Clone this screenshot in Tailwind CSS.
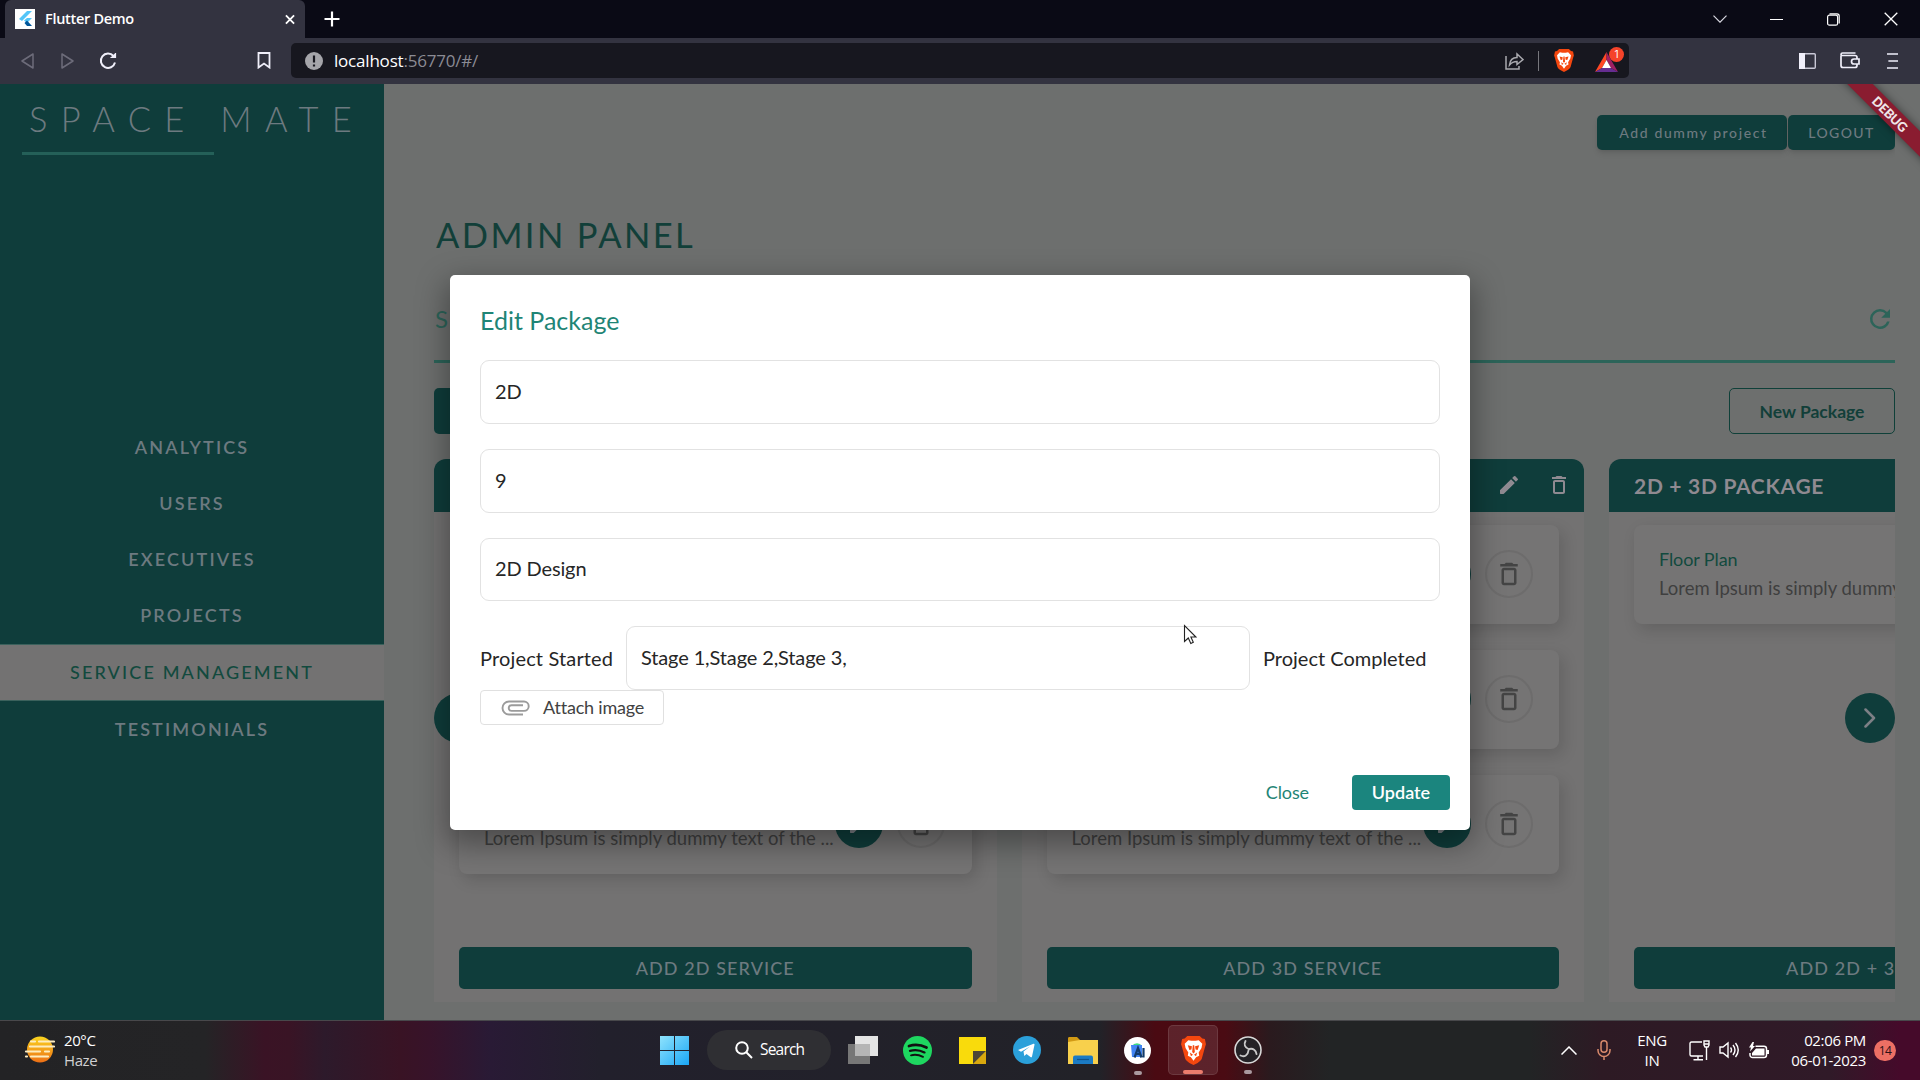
<!DOCTYPE html>
<html lang="en">
<head>
<meta charset="utf-8">
<title>Flutter Demo</title>
<script src="https://cdn.jsdelivr.net/npm/@tailwindcss/browser@4"></script>
</head>
<body class="w-[1920px] h-[1080px] overflow-hidden flex flex-col bg-[#6d6f6e] font-[Lato,sans-serif]">
<svg class="hidden">
  <symbol id="trash" viewBox="0 0 24 24"><path fill="currentColor" d="M6 19c0 1.1.9 2 2 2h8c1.1 0 2-.9 2-2V9c0-1.100-.9-2-2-2H8c-1.100 0-2 .9-2 2v10zM8 9h8v10H8V9zm7.500-5l-1-1h-5l-1 1H5v2h14V4h-3.500z"/></symbol>
  <symbol id="pen" viewBox="0 0 24 24"><path fill="currentColor" d="M3 17.460v3.040c0 .28.22.5.5.5h3.040c.13 0 .26-.05.35-.15L17.810 9.940l-3.750-3.750L3.150 17.100c-.1.1-.15.22-.15.36zM20.710 7.040a1 1 0 0 0 0-1.410l-2.340-2.340a1 1 0 0 0-1.410 0l-1.830 1.830 3.750 3.750 1.830-1.830z"/></symbol>
  <symbol id="brave" viewBox="0 0 24 28"><path fill="#f4470f" d="M6 0h12l2.500 2.500L23 3l1 5-1 3-3 11c-.5 1.500-2 2.500-4 4l-4 2-4-2c-2-1.500-3.500-2.500-4-4L1 11 0 8l1-5 2.500-.5z"/><path fill="#fff" d="M7 4l3 .7h4L17 4l3.500 3.500-.8 4L17 16l.5 3-3 1.500L12 24l-2.500-3.500-3-1.500.5-3-2.700-4.500-.8-4z"/><path fill="#f4470f" d="M6.500 9l4 1-.5 3-2 .5zM17.500 9l-4 1 .5 3 2 .5zM11.300 9h1.400l.6 6.500L12 16.800l-1.300-1.300zM8.500 16l3 2-2 1.500zM15.500 16l-3 2 2 1.500z"/></symbol>
</svg>

<!-- Tab strip -->
<header class="h-[38px] shrink-0 bg-[#0a0a15] flex items-end pl-[5px] text-white">
  <div class="w-[300px] h-[38px] bg-[#333340] rounded-t-[6px] flex items-center pl-[10px] pr-[10px]">
    <div class="w-5 h-5 bg-white flex items-center justify-center">
      <svg class="w-4 h-[18px]" viewBox="0 0 16 18"><path fill="#54c5f8" d="M10 1h5L5 11 2 9z"/><path fill="#54c5f8" d="M10 8h5l-5 5-3-2.500z"/><path fill="#01579b" d="M7.500 13l2.500-2.500L15 16h-5z"/></svg>
    </div>
    <span class="ml-[10px] text-[14.500px] font-semibold tracking-[-0.300px] font-['Open_Sans',sans-serif] grow">Flutter Demo</span>
    <svg class="w-[10px] h-[11px]" viewBox="0 0 11 11" stroke="#fff" stroke-width="2"><path d="M1 1l9 9M10 1l-9 9"/></svg>
  </div>
  <svg class="w-4 h-4 ml-[19px] mb-[11px] self-end" viewBox="0 0 16 16" stroke="#fff" stroke-width="2.200"><path d="M8 0.500v15M.5 8h15"/></svg>
  <div class="ml-auto h-full flex items-center pr-[22px]">
    <svg class="w-[14px] h-[8px] mr-[43px]" viewBox="0 0 14 8" fill="none" stroke="#d8d8e0" stroke-width="1.200"><path d="M.5.7L7 7.200 13.500.7"/></svg>
    <div class="w-[13px] h-px bg-white mr-[44px]"></div>
    <svg class="w-[13px] h-[13px] mr-[44px]" viewBox="0 0 13 13" fill="none" stroke="#fff" stroke-width="1.200"><rect x=".6" y="2.200" width="10" height="10" rx="1.800"/><path d="M2.500.8H10a2.200 2.200 0 0 1 2.200 2.200v7.500"/></svg>
    <svg class="w-[14px] h-[14px]" viewBox="0 0 14 14" stroke="#fff" stroke-width="1.300"><path d="M.7.7l12.600 12.600M13.300.7L.7 13.300"/></svg>
  </div>
</header>

<!-- Toolbar -->
<div class="h-[46px] shrink-0 bg-[#333340] flex items-center pb-[1px]">
  <svg class="w-[13px] h-4 ml-[21px]" viewBox="0 0 13 16" fill="none" stroke="#6d6c7a" stroke-width="1.500" stroke-linejoin="round"><path d="M12 1v14L1 8z"/></svg>
  <svg class="w-[13px] h-4 ml-[27px]" viewBox="0 0 13 16" fill="none" stroke="#6d6c7a" stroke-width="1.500" stroke-linejoin="round"><path d="M1 1v14l11-7z"/></svg>
  <svg class="w-[18px] h-[18px] ml-[25px]" viewBox="0 0 18 18" fill="none" stroke="#f0effa" stroke-width="2"><path d="M14.500 4A7.200 7.200 0 1 0 16 10.500"/><path d="M11.500 5.500h5V1" fill="#f0effa" stroke-width="1.200"/></svg>
  <svg class="w-[14px] h-[17px] ml-[140px]" viewBox="0 0 14 17" fill="none" stroke="#f0effa" stroke-width="1.800"><path d="M1.500 1h11v14.500L7 11.500l-5.500 4z"/></svg>
  <div class="ml-[20px] w-[1338px] h-[35px] bg-[#17171f] rounded-[5px] flex items-center pl-[14px] pr-[5px]">
    <svg class="w-[18px] h-[18px]" viewBox="0 0 18 18"><circle cx="9" cy="9" r="9" fill="#a5a5aa"/><path d="M9 3.500v7M9 12.500v2" stroke="#17171f" stroke-width="2.200"/></svg>
    <span class="ml-[11px] text-[17px] tracking-[-0.200px] font-['Open_Sans',sans-serif] text-[#8b8b94] grow"><span class="text-white">localhost</span>:56770/#/</span>
    <svg class="w-[19px] h-[18px]" viewBox="0 0 19 18" fill="none" stroke="#a9a9ae" stroke-width="1.500"><path d="M1 4v13h13v-3M4.500 13c.5-5 3-7.500 7.500-7.500V2l6 5.500-6 5V9.500c-3 0-5.500 1-7.500 3.500z"/></svg>
    <div class="w-px h-5 bg-[#77777d] ml-[14px] mr-[15px]"></div>
    <svg class="w-5 h-[23px]"><use href="#brave"/></svg>
    <div class="relative ml-[21px] w-[29px] h-[25px]">
      <svg class="absolute left-0 bottom-[1px] w-[23px] h-5" viewBox="0 0 23 20"><path fill="#ff4724" d="M11.500 0L0 20l7-4 4.500-8z"/><path fill="#9e1f63" d="M11.500 0L23 20l-7-4-4.500-8z"/><path fill="#662d91" d="M0 20h23l-7-4H7z"/><path fill="#fff" d="M11.500 8L16 16H7z"/></svg>
      <span class="absolute right-0 top-[-1px] w-[15px] h-[15px] rounded-full bg-[#f5432a] text-white text-[10px] leading-[15px] text-center font-[Inter,sans-serif]">1</span>
    </div>
  </div>
  <svg class="w-[17px] h-4 ml-[170px]" viewBox="0 0 17 16"><rect x=".7" y=".7" width="15.600" height="14.600" rx="1" fill="none" stroke="#c9c8d6" stroke-width="1.400"/><path fill="#f0effa" d="M0 0h6v16H0z"/></svg>
  <svg class="w-5 h-[17px] ml-6" viewBox="0 0 20 17" fill="none" stroke="#f0effa" stroke-width="1.700"><path d="M1 3.500v10a2 2 0 0 0 2 2h12a2 2 0 0 0 2-2V12M17 7V5.500a2 2 0 0 0-2-2H2.500A1.500 1.500 0 0 1 1 2.300 1.500 1.500 0 0 1 2.500 1H15.500"/><path d="M19 7h-5a2.500 2.500 0 0 0 0 5h5z"/></svg>
  <svg class="w-[11px] h-4 ml-[27px]" viewBox="0 0 12 16" preserveAspectRatio="none" stroke="#f0effa" stroke-width="1.700"><path d="M0 1h12M1.500 8H12M0 15h12"/></svg>
</div>

<!-- Application page -->
<div class="relative h-[936px] shrink-0 flex overflow-hidden">
  <aside class="w-[384px] shrink-0 bg-[#0f3d3b] text-[#6d7a80]">
    <div class="h-[68px] pt-[12px] pl-[29px] text-[34.500px] leading-[46px] font-light tracking-[13.300px] whitespace-nowrap">SPACE MATE</div>
    <div class="ml-[22px] w-[192px] h-[3px] bg-[#246058]"></div>
    <nav class="mt-[264px] flex flex-col text-[18px] font-semibold tracking-[2.150px] text-center">
      <div class="h-14 leading-[56px]">ANALYTICS</div>
      <div class="h-14 leading-[57px]">USERS</div>
      <div class="h-14 leading-[57px]">EXECUTIVES</div>
      <div class="h-[57px] leading-[57px]">PROJECTS</div>
      <div class="h-[57px] leading-[54px] bg-[#737272] text-[#124a3e] font-medium border-y border-[#3b615c]">SERVICE MANAGEMENT</div>
      <div class="h-14 leading-[56px]">TESTIMONIALS</div>
    </nav>
  </aside>
  <main class="w-[1511px] shrink-0 pl-[50px] overflow-hidden">
    <div class="pt-[31px] flex justify-end gap-px text-[14px] font-medium text-[#6d7a80]">
      <div class="w-[190px] h-[35px] rounded-[5px] bg-[#0f3d3b] shadow-md leading-[36px] text-center tracking-[1.600px] pl-[3px]">Add dummy project</div>
      <div class="w-[107px] h-[35px] rounded-[5px] bg-[#0f3d3b] shadow-md leading-[36px] text-center tracking-[1.400px]">LOGOUT</div>
    </div>
    <h1 class="mt-[61px] h-[48px] pl-[2px] text-[34.500px] leading-[48px] tracking-[2.400px] text-[#123f39]">ADMIN PANEL</h1>
    <div class="mt-[19px] h-[85px] flex items-center justify-between border-b-[3px] border-[#2c6459]">
      <span class="text-[24px] text-[#2c6459] pl-px">S</span>
      <svg class="w-[30px] h-[30px] text-[#2c6459]" viewBox="0 0 24 24"><path fill="currentColor" d="M17.650 6.350A7.960 7.960 0 0 0 12 4a8 8 0 1 0 7.730 10h-2.080A6 6 0 1 1 12 6c1.660 0 3.140.69 4.220 1.780L13 11h7V4l-2.350 2.350z"/></svg>
    </div>
    <div class="mt-[25px] flex justify-between">
      <div class="w-[166px] h-[46px] rounded-[5px] bg-[#0f3d3b]"></div>
      <div class="w-[166px] h-[46px] rounded-[5px] border border-[#0f4039] leading-[45px] text-center text-[#123f39] font-bold text-[17.500px]">New Package</div>
    </div>
    <div class="mt-[25px] flex gap-[25px] w-[1738px]">
      <section class="w-[562.500px] h-[543px] shrink-0 bg-[#737272] rounded-t-[12px] overflow-hidden flex flex-col">
        <div class="h-[52.500px] shrink-0 bg-[#0f3d3b]"></div>
        <div class="p-[25px] pt-[13px] flex flex-col gap-[26px] text-[18px]">
          <div class="h-[99px] rounded-[8px] bg-[#757474] shadow-[4px_6px_16px_rgba(0,0,0,0.14)]"></div>
          <div class="h-[99px] rounded-[8px] bg-[#757474] shadow-[4px_6px_16px_rgba(0,0,0,0.14)]"></div>
          <div class="h-[99px] rounded-[8px] bg-[#757474] shadow-[4px_6px_16px_rgba(0,0,0,0.14)] flex items-center pl-[25px]">
            <div class="w-[351px] pt-[29px] leading-[29px]"><p class="text-[#3f3f3f] text-[18.500px] whitespace-nowrap">Lorem Ipsum is simply dummy text of the ...</p></div>
            <div class="w-12 h-12 rounded-full bg-[#0f3d3b] flex items-center justify-center text-[#7d8086]"><svg class="w-6 h-6"><use href="#pen"/></svg></div>
            <div class="ml-[14px] w-12 h-12 rounded-full border-2 border-[#6d6c6c] flex items-center justify-center text-[#444]"><svg class="w-[30px] h-[30px]"><use href="#trash"/></svg></div>
          </div>
        </div>
        <div class="mx-[25px] mt-[48px] h-[42px] shrink-0 rounded-[5px] bg-[#0f3d3b] leading-[42px] text-center text-[18px] font-medium tracking-[1.100px] text-[#6d7a80]">ADD 2D SERVICE</div>
      </section>
      <section class="w-[562.500px] h-[543px] shrink-0 bg-[#737272] rounded-t-[12px] overflow-hidden flex flex-col">
        <div class="h-[52.500px] shrink-0 bg-[#0f3d3b] pr-[13px] flex items-center justify-end text-[#8f8a91]"><svg class="w-6 h-6 mr-[26px]"><use href="#pen"/></svg><svg class="w-6 h-6"><use href="#trash"/></svg></div>
        <div class="p-[25px] pt-[13px] flex flex-col gap-[26px] text-[18px]">
          <div class="h-[99px] rounded-[8px] bg-[#757474] shadow-[4px_6px_16px_rgba(0,0,0,0.14)] flex items-center pl-[376px]">
            <div class="w-12 h-12 rounded-full bg-[#0f3d3b]"></div>
            <div class="ml-[14px] w-12 h-12 rounded-full border-2 border-[#6d6c6c] flex items-center justify-center text-[#444]"><svg class="w-[30px] h-[30px]"><use href="#trash"/></svg></div>
          </div>
          <div class="h-[99px] rounded-[8px] bg-[#757474] shadow-[4px_6px_16px_rgba(0,0,0,0.14)] flex items-center pl-[376px]">
            <div class="w-12 h-12 rounded-full bg-[#0f3d3b]"></div>
            <div class="ml-[14px] w-12 h-12 rounded-full border-2 border-[#6d6c6c] flex items-center justify-center text-[#444]"><svg class="w-[30px] h-[30px]"><use href="#trash"/></svg></div>
          </div>
          <div class="h-[99px] rounded-[8px] bg-[#757474] shadow-[4px_6px_16px_rgba(0,0,0,0.14)] flex items-center pl-[25px]">
            <div class="w-[351px] pt-[29px] leading-[29px]"><p class="text-[#3f3f3f] text-[18.500px] whitespace-nowrap">Lorem Ipsum is simply dummy text of the ...</p></div>
            <div class="w-12 h-12 rounded-full bg-[#0f3d3b] flex items-center justify-center text-[#7d8086]"><svg class="w-6 h-6"><use href="#pen"/></svg></div>
            <div class="ml-[14px] w-12 h-12 rounded-full border-2 border-[#6d6c6c] flex items-center justify-center text-[#444]"><svg class="w-[30px] h-[30px]"><use href="#trash"/></svg></div>
          </div>
        </div>
        <div class="mx-[25px] mt-[48px] h-[42px] shrink-0 rounded-[5px] bg-[#0f3d3b] leading-[42px] text-center text-[18px] font-medium tracking-[1.100px] text-[#6d7a80]">ADD 3D SERVICE</div>
      </section>
      <section class="w-[562.500px] h-[543px] shrink-0 bg-[#737272] rounded-t-[12px] overflow-hidden flex flex-col">
        <div class="h-[52.500px] shrink-0 bg-[#0f3d3b] px-[25px] flex items-center text-[#8f8a91] text-[21px] font-bold tracking-[0.700px]">2D + 3D PACKAGE</div>
        <div class="p-[25px] pt-[13px] h-[399px] shrink-0 text-[18px]">
          <div class="h-[99px] rounded-[8px] bg-[#757474] shadow-[4px_6px_16px_rgba(0,0,0,0.14)] flex items-center pl-[25px]">
            <div class="leading-[29px] whitespace-nowrap"><p class="text-[#124a3e] tracking-[-0.100px]">Floor Plan</p><p class="text-[#3f3f3f] text-[18.500px]">Lorem Ipsum is simply dummy</p></div>
          </div>
        </div>
        <div class="mx-[25px] mt-[36px] h-[42px] shrink-0 rounded-[5px] bg-[#0f3d3b] leading-[42px] text-center text-[18px] font-medium tracking-[1.100px] text-[#6d7a80]">ADD 2D + 3D SERVICE</div>
      </section>
    </div>
  </main>

  <!-- Carousel arrows float over the columns -->
  <div class="absolute left-[434px] top-[609px] w-[50px] h-[50px] rounded-full bg-[#0f3d3b]"></div>
  <div class="absolute left-[1845px] top-[609px] w-[50px] h-[50px] rounded-full bg-[#0f3d3b] flex items-center justify-center">
    <svg class="w-3 h-5" viewBox="0 0 12 20" fill="none" stroke="#7d8086" stroke-width="2.500" stroke-linecap="round" stroke-linejoin="round"><path d="M1.500 1.500L10 10l-8.500 8.500"/></svg>
  </div>

  <!-- Debug ribbon -->
  <div class="absolute left-[1819px] top-[21px] w-[142px] h-[18px] rotate-45 bg-[#8a1c30] shadow-[0_0_8px_rgba(0,0,0,0.5)] text-[#efe6e8] text-[13px] leading-[18px] tracking-[-0.300px] font-black text-center">DEBUG</div>

  <!-- Dialog -->
  <div class="absolute left-[450px] top-[191px] w-[1020px] h-[555px] rounded-[5px] bg-white shadow-[0_11px_30px_4px_rgba(0,0,0,0.35)] px-[30px] pt-[30px] text-[20px] text-[#262626] flex flex-col">
    <h2 class="h-[32px] leading-[31px] text-[25px] text-[#1f8576]">Edit Package</h2>
    <div class="mt-[23px] h-[64px] rounded-[9px] border border-[#e2e2e2] px-[14px] leading-[60px] tracking-[-0.130px]">2D</div>
    <div class="mt-[25px] h-[64px] rounded-[9px] border border-[#e2e2e2] px-[14px] leading-[60px] tracking-[-0.130px]">9</div>
    <div class="mt-[25px] h-[63px] rounded-[9px] border border-[#e2e2e2] px-[14px] leading-[59px] tracking-[-0.130px]">2D Design</div>
    <div class="mt-[25px] flex h-[64px] items-center">
      <span class="w-[146px] tracking-[0.150px]">Project Started</span>
      <div class="w-[624px] h-[64px] rounded-[9px] border border-[#e2e2e2] px-[14px] leading-[60px] tracking-[-0.130px]">Stage 1,Stage 2,Stage 3,</div>
      <span class="ml-[13px]">Project Completed</span>
    </div>
    <div class="w-[184px] h-[35px] rounded-[4px] border border-[#e0e0e0] flex items-center pl-[20px] text-[18px] tracking-[-0.200px] text-[#424242]">
      <svg class="w-[30px] h-[16px] mr-[12px]" viewBox="0 0 30 16" fill="none" stroke="#9b9b9b" stroke-width="1.900"><path d="M22 14.500H8a6.500 6.500 0 0 1 0-13h15a4.700 4.700 0 0 1 0 9.400H10.500a2.800 2.800 0 0 1 0-5.600H22"/></svg>Attach image
    </div>
    <div class="mt-[50px] flex justify-end items-center mr-[-10px] text-[18px]">
      <span class="mr-[43px] text-[#1f8576] tracking-[-0.100px]">Close</span>
      <div class="w-[98px] h-[35px] rounded-[4px] bg-[#1b857e] leading-[35px] text-center text-white font-semibold">Update</div>
    </div>
  </div>
  <svg class="absolute left-[1183px] top-[540px] w-[14px] h-[21px]" viewBox="0 0 14 21"><path d="M1.500 1.500v16l3.800-3.500 2.500 5.500 2.500-1.200-2.400-5.300h5z" fill="#fff" stroke="#222" stroke-width="1.100"/></svg>
</div>

<!-- Taskbar -->
<footer class="relative h-[60px] shrink-0 border-t border-[#48484b] flex items-center text-white font-['Open_Sans',sans-serif] bg-[linear-gradient(90deg,#232325_0px,#242426_205px,#3a1325_265px,#391425_290px,#2d1a2b_325px,#391324_400px,#37132a_430px,#291a35_490px,#22202c_600px,#222228_1100px,#4a0a12_1155px,#4a0b13_1225px,#2a1a1e_1270px,#222425_1330px,#222425_1530px,#2d1a24_1600px,#301a28_1830px,#450a2a_1900px)]">
  <svg class="w-[31px] h-7 ml-[24px] mb-[2px]" viewBox="0 0 31 28"><defs><linearGradient id="sun" x2="0" y2="1"><stop stop-color="#fbd51f"/><stop offset="1" stop-color="#ec6f16"/></linearGradient></defs><circle cx="16" cy="13.500" r="13" fill="url(#sun)"/><g stroke="#fdecc0" stroke-width="2.200" stroke-linecap="round"><path d="M7 5.500h4M15 5.500h15M6 10.500h24M2 15.500h14M21 15.500h4M2 20.500h1M7 20.500h17"/></g></svg>
  <div class="ml-[9px] mb-[2px] w-[80px] leading-[20px] text-[15px] tracking-[-0.400px]"><p>20°C</p><p class="text-[#d0d0d2]">Haze</p></div>
  <div class="absolute left-[660px] top-[4px] h-[50px] flex items-center">
    <svg class="w-[29px] h-[29px]" viewBox="0 0 29 29"><defs><linearGradient id="win" x2="1" y2="1"><stop stop-color="#8fe3fd"/><stop offset="1" stop-color="#1aa6f5"/></linearGradient></defs><path fill="url(#win)" d="M0 0h14v14H0zM15 0h14v14H15zM0 15h14v14H0zM15 15h14v14H15z"/></svg>
    <div class="ml-[18px] w-[124px] h-10 rounded-full bg-[#2f2f33] flex items-center pl-[28px] text-[15.500px] tracking-[-0.800px]">
      <svg class="w-[18px] h-[18px] mr-[7px]" viewBox="0 0 18 18" fill="none" stroke="#fff" stroke-width="2"><circle cx="7" cy="7" r="5.800"/><path d="M11.300 11.300L17 17"/></svg>Search
    </div>
    <svg class="w-[30px] h-[28px] ml-[17px]" viewBox="0 0 30 28"><path fill="#e4e4e4" d="M7 0h23v20H7z"/><path fill="#777" d="M0 8h22v20H0z"/><path fill="#b5b5b5" d="M7 8h15v12H7z"/></svg>
    <svg class="w-[29px] h-[29px] ml-[25px]" viewBox="0 0 29 29"><circle cx="14.500" cy="14.500" r="14.500" fill="#1ed760"/><g fill="none" stroke="#111" stroke-linecap="round"><path d="M6 10c6-1.800 12-1.200 17.500 1.500" stroke-width="2.800"/><path d="M7 14.800c5-1.400 10-.8 14.500 1.600" stroke-width="2.300"/><path d="M8 19.300c4-1 8-.5 12 1.500" stroke-width="1.900"/></g></svg>
    <svg class="w-[27px] h-[27px] ml-[27px]" viewBox="0 0 27 27"><path fill="#f9db0c" d="M0 0h27v14L14 27H0z"/><path fill="#4b4636" d="M14 14h13L14 27z"/><path fill="#d9a80e" d="M27 14v13H14z"/></svg>
    <svg class="w-7 h-7 ml-[27px]" viewBox="0 0 28 28"><circle cx="14" cy="14" r="14" fill="#2ba0da"/><path fill="#fff" d="M5 14l15.500-6.200c.8-.2 1.100.2 1 .9L19 20.500c-.2.900-.8 1-1.500.6l-4-3-2.200 2-.8-4.600L17 10.500l-9 5.200z"/></svg>
    <svg class="w-[30px] h-[27px] ml-[27px]" viewBox="0 0 30 27"><path fill="#d29a14" d="M0 1.500C0 .5.5 0 1.500 0H9l3 3v4H0z"/><path fill="#f8d04c" d="M0 5l12-2h18v24H0z"/><path fill="#1b7bc4" d="M5 27v-6.500a2 2 0 0 1 2-2h16a2 2 0 0 1 2 2V27z"/><path stroke="#0f548c" stroke-width="1.200" d="M9 22.500h12"/></svg>
    <div class="relative w-[27px] h-[29px] ml-[26px]">
      <svg class="w-[27px] h-[29px]" viewBox="0 0 27 29"><circle cx="13.500" cy="14.500" r="13.500" fill="#fff"/><path fill="#3ddc84" d="M8 10a5.500 4.500 0 0 1 10 0z"/><path fill="#4285f4" d="M7 9h11v12H8z"/><path fill="none" stroke="#123b6b" stroke-width="2.200" d="M10.500 21.500L14 12l3.500 9.500M12 18h4.500M19.500 12v9.500"/></svg>
      <i class="absolute left-[10px] top-[35px] w-2 h-1 rounded-full bg-[#a9999f]"></i>
    </div>
    <div class="relative ml-[17px] w-[50px] h-[50px] rounded-[5px] bg-white/10 border border-white/10 flex items-center justify-center">
      <svg class="w-[25px] h-[29px]"><use href="#brave"/></svg>
      <i class="absolute left-[14px] bottom-0 w-5 h-1 rounded-full bg-[#ec7c6d]"></i>
    </div>
    <div class="relative w-7 h-7 ml-[16px]">
      <svg class="w-7 h-7" viewBox="0 0 28 28"><circle cx="14" cy="14" r="13" fill="#242226" stroke="#d8d8d8" stroke-width="1.600"/><g fill="none" stroke="#c9c9c9" stroke-width="1.900" stroke-linecap="round"><path d="M11.500 5c-2 3.500-.5 6.500 3 8"/><path d="M22.500 18c-.5-4-3.500-5.800-7-5"/><path d="M6.500 19.500c4 2 7.500-.5 8-5"/></g></svg>
      <i class="absolute left-[10px] top-[34px] w-2 h-1 rounded-full bg-[#a9999f]"></i>
    </div>
  </div>
  <div class="ml-auto pr-[24px] flex items-center pb-[1px]">
    <svg class="w-4 h-[9px]" viewBox="0 0 16 9" fill="none" stroke="#fff" stroke-width="1.500"><path d="M.5 8.500L8 1l7.500 7.500"/></svg>
    <svg class="w-[14px] h-5 ml-[20px]" viewBox="0 0 14 20" fill="none" stroke="#d98a6c" stroke-width="1.500"><rect x="4" y=".8" width="6" height="11.500" rx="3"/><path d="M1 9v1.500a6 6 0 0 0 12 0V9M7 16.500V20"/></svg>
    <div class="ml-[26px] w-[30px] text-center leading-[20px] text-[15px] tracking-[-0.300px]"><p>ENG</p><p>IN</p></div>
    <svg class="w-[21px] h-[21px] ml-[22px]" viewBox="0 0 21 21" fill="none" stroke="#fff" stroke-width="1.400"><path d="M13 2H2.500Q1 2 1 3.500v11Q1 16 2.500 16H14M9 16v3.500M4.500 19.700H14M17.500 7v13"/><path d="M15 1h5v4l-1 2h-3l-1-2zM15 4h5"/></svg>
    <svg class="w-5 h-[18px] ml-[9px]" viewBox="0 0 20 18" fill="none" stroke="#fff" stroke-width="1.400"><path d="M1 6h3l5-4v14l-5-4H1zM11.500 6.500q2 2.500 0 5M14 4q4 5 0 10M16.500 2q5.500 7 0 14"/></svg>
    <svg class="w-5 h-[17px] ml-[10px]" viewBox="0 0 20 17"><path d="M6.500 4.200H15a2.500 2.500 0 0 1 2.500 2.500V13A2.500 2.500 0 0 1 15 15.500H3.500A2.500 2.500 0 0 1 1 13v-2" fill="none" stroke="#fff" stroke-width="1.500"/><path fill="#fff" d="M7 6.500h8.500v7H3V11zM18 8h2v4h-2zM3.500 0L0 5.500h2L1 9.500l5-5.500H4L5 0z"/></svg>
    <div class="ml-[17px] w-[80px] text-right whitespace-nowrap leading-[20px] text-[15px] tracking-[-0.350px]"><p>02:06 PM</p><p>06-01-2023</p></div>
    <div class="ml-[8px] w-[22px] h-[21px] rounded-full bg-[#ec6f64] text-[#2b1016] text-[12px] leading-[21px] text-center tracking-[-0.500px]">14</div>
  </div>
</footer>
</body>
</html>
